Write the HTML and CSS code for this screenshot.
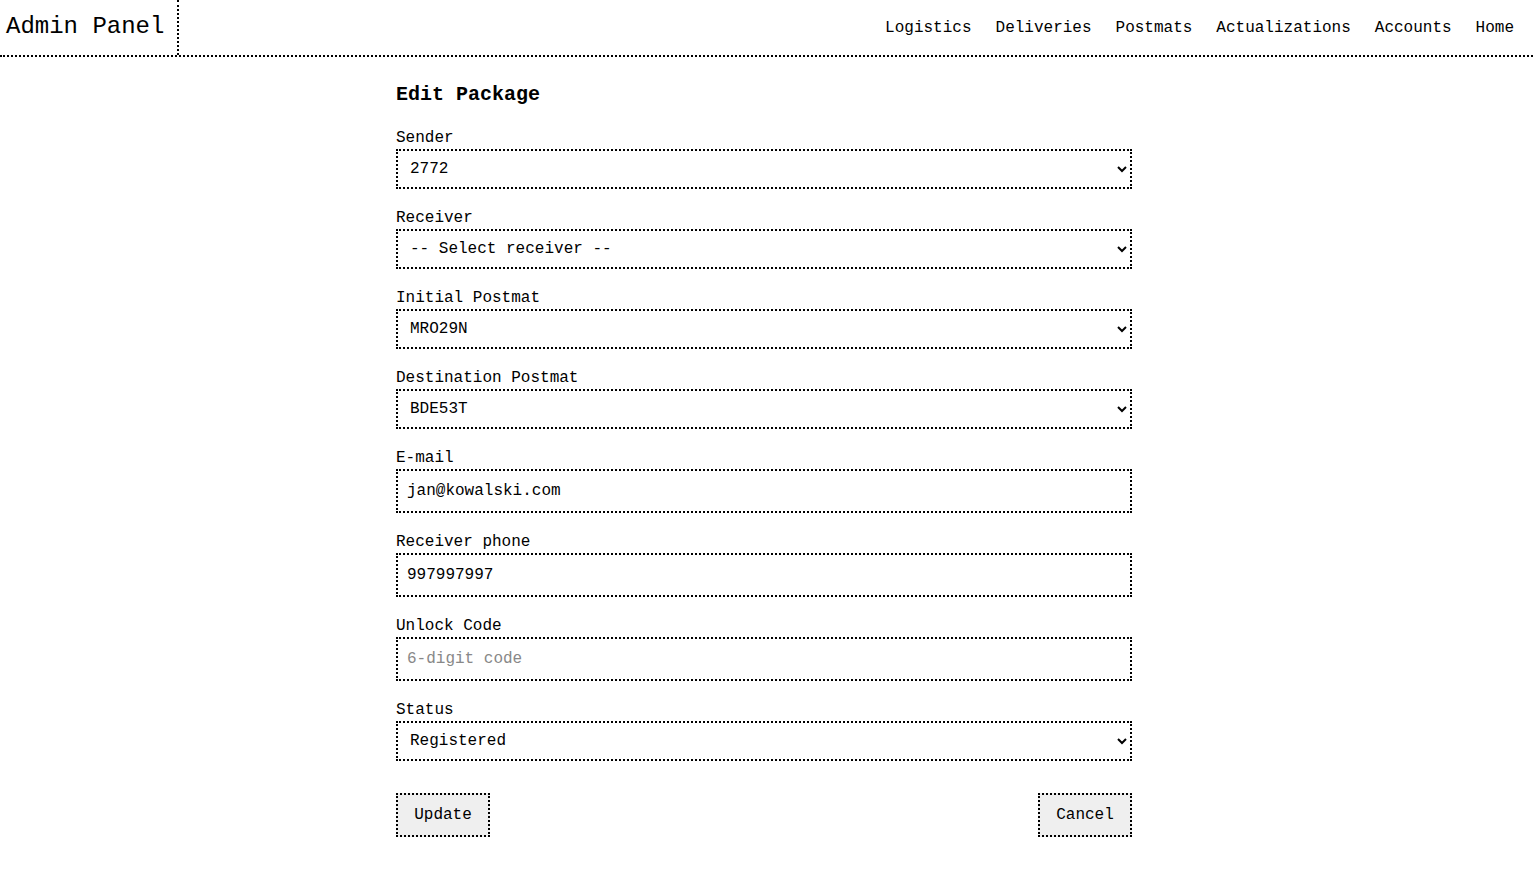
FILE: index.html
```html
<!DOCTYPE html>
<html lang="en">
<head>
<meta charset="utf-8">
<title>Admin Panel</title>
<link rel="stylesheet" href="styles.css">
</head>
<body>
<header class="topbar">
  <div class="brand">Admin Panel</div>
  <nav class="nav">
    <a href="#">Logistics</a>
    <a href="#">Deliveries</a>
    <a href="#">Postmats</a>
    <a href="#">Actualizations</a>
    <a href="#">Accounts</a>
    <a href="#">Home</a>
  </nav>
</header>
<main class="content">
  <h2 class="title">Edit Package</h2>
  <form class="form">
    <div class="group">
      <label class="label">Sender</label>
      <select class="field select"><option>2772</option></select>
    </div>
    <div class="group">
      <label class="label">Receiver</label>
      <select class="field select"><option>-- Select receiver --</option></select>
    </div>
    <div class="group">
      <label class="label">Initial Postmat</label>
      <select class="field select"><option>MRO29N</option></select>
    </div>
    <div class="group">
      <label class="label">Destination Postmat</label>
      <select class="field select"><option>BDE53T</option></select>
    </div>
    <div class="group">
      <label class="label">E-mail</label>
      <input class="field input" type="text" value="jan@kowalski.com">
    </div>
    <div class="group">
      <label class="label">Receiver phone</label>
      <input class="field input" type="text" value="997997997">
    </div>
    <div class="group">
      <label class="label">Unlock Code</label>
      <input class="field input" type="text" placeholder="6-digit code">
    </div>
    <div class="group">
      <label class="label">Status</label>
      <select class="field select"><option>Registered</option></select>
    </div>
    <div class="actions">
      <button type="button" class="btn">Update</button>
      <button type="button" class="btn">Cancel</button>
    </div>
  </form>
</main>
</body>
</html>
```
FILE: styles.css
```css
* { box-sizing: border-box; }
body {
  margin: 0;
  font-family: "Liberation Mono", "DejaVu Sans Mono", monospace;
  color: #000;
  background: #fff;
}
.topbar {
  display: flex;
  justify-content: space-between;
  align-items: stretch;
  height: 57px;
  border-bottom: 2px dotted #000;
}
.brand {
  font-size: 24px;
  line-height: 54px;
  padding: 0 13px 0 6px;
  border-right: 2px dotted #000;
}
.nav {
  display: flex;
  align-items: center;
  gap: 24px;
  padding-right: 19px;
}
.nav a {
  color: #000;
  text-decoration: none;
  font-size: 16px;
}
.content {
  width: 741px;
  padding-right: 5px;
  margin: 0 auto;
  padding-top: 26px;
}
.title {
  font-size: 20px;
  line-height: 23px;
  font-weight: bold;
  margin: 0 0 23px 0;
}
.group {
  margin-bottom: 20px;
}
.label {
  display: block;
  font-size: 16px;
  line-height: 18px;
  margin-bottom: 2px;
}
.field {
  display: block;
  width: 100%;
  border: 2px dotted #000;
  border-radius: 0;
  background: #fff;
  color: #000;
  font-family: "Liberation Mono", "DejaVu Sans Mono", monospace;
  font-size: 16px;
  outline: none;
}
.select {
  height: 40px;
  padding: 0 6px 0 8px;
}
.input {
  height: 44px;
  padding: 0 9px;
}
.input::placeholder {
  color: #888;
}
.actions {
  display: flex;
  justify-content: space-between;
  margin-top: 32px;
}
.btn {
  font-family: "Liberation Mono", "DejaVu Sans Mono", monospace;
  font-size: 16px;
  line-height: 18px;
  color: #000;
  background: #efefef;
  border: 2px dotted #000;
  border-radius: 0;
  padding: 11px 16px;
  width: 94px;
  height: 44px;
}
```
